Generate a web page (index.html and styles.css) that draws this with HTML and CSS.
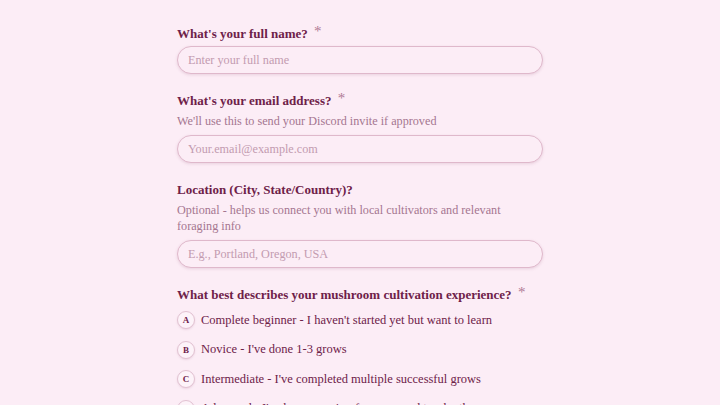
FILE: index.html
```html
<!doctype html>
<html>

<head lang="en">
  <meta charset="utf-8">
  <meta name="viewport" content="width=device-width, initial-scale=1">
  <title>Grower Application</title>
  <link rel="stylesheet" href="styles.css">
</head>

<body>
  <form class="page">
    <div class="field">
      <label class="label" for="name">What's your full name? <span class="req">*</span></label>
      <input class="text" id="name" placeholder="Enter your full name" />
    </div>

    <div class="field">
      <label class="label" for="email">What's your email address? <span class="req">*</span></label>
      <p class="hint">We'll use this to send your Discord invite if approved</p>
      <input class="text" id="email" placeholder="Your.email@example.com" />
    </div>

    <div class="field">
      <label class="label" for="location">Location (City, State/Country)?</label>
      <p class="hint">Optional - helps us connect you with local cultivators and relevant foraging info</p>
      <input class="text" id="location" placeholder="E.g., Portland, Oregon, USA" />
    </div>

    <div class="field">
      <div class="label">What best describes your mushroom cultivation experience? <span class="req">*</span></div>
      <ul class="choices">
        <li><span class="key">A</span> Complete beginner - I haven't started yet but want to learn</li>
        <li><span class="key">B</span> Novice - I've done 1-3 grows</li>
        <li><span class="key">C</span> Intermediate - I've completed multiple successful grows</li>
        <li><span class="key">D</span> Advanced - I've been growing for years and teach others</li>
      </ul>
    </div>
  </form>
</body>

</html>
```

FILE: styles.css
```css
body {
  margin: 0;
  background: #fcedf6;
  font-family: "Liberation Serif", "DejaVu Serif", serif;
  color: #6e2149;
}

.page {
  width: 366px;
  margin: 0 auto;
  padding-top: 24px;
}

.field {
  margin-bottom: 17px;
}

.label {
  display: block;
  font-size: 13px;
  font-weight: bold;
  line-height: 20px;
  margin-bottom: 2px;
}

.req {
  position: relative;
  top: -2px;
  margin-left: 3px;
  color: #b07a95;
  font-weight: normal;
  font-size: 15px;
  line-height: 1;
}

.hint {
  margin: 0 0 6px;
  font-size: 12.2px;
  line-height: 16px;
  color: #a57690;
}

.text {
  display: block;
  box-sizing: border-box;
  width: 100%;
  height: 28px;
  padding: 0 10px;
  border: 1px solid #dfb8cb;
  border-radius: 14px;
  background: #fcedf6;
  box-shadow: 0 1px 3px rgba(150, 80, 115, .18);
  font-family: inherit;
  font-size: 12.2px;
  color: #6e2149;
  outline: none;
}

.text::placeholder {
  color: #c39bb0;
}

.choices {
  list-style: none;
  margin: 5px 0 0;
  padding: 0;
}

.choices li {
  display: flex;
  align-items: center;
  gap: 6px;
  height: 20px;
  margin-bottom: 9.5px;
  font-size: 12.5px;
  white-space: nowrap;
}

.key {
  display: inline-flex;
  align-items: center;
  justify-content: center;
  flex: none;
  width: 16px;
  height: 16px;
  border: 1px solid #e2c2d2;
  border-radius: 50%;
  background: #fdf3f9;
  box-shadow: 0 1px 2px rgba(150, 80, 115, .15);
  font-size: 9px;
  font-weight: bold;
}
```
